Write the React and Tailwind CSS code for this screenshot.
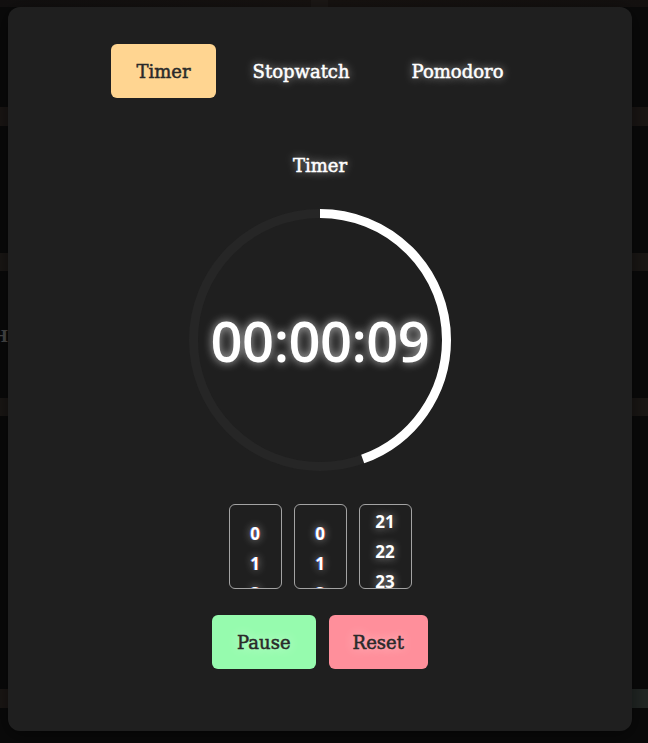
import React from "react";

const serif = { fontFamily: '"DejaVu Serif", "Liberation Serif", serif' };
const sans = { fontFamily: '"Open Sans", "Noto Sans", sans-serif' };

const Wheel = ({ items, offset, fringe }) => {
  return (
    <div className="w-[53px] h-[85px] border border-[#a3a3a3] rounded-md overflow-hidden">
      <div className={`flex flex-col items-center ${offset}`}>
        {items.map((n) => (
          <div
            key={n}
            className={`h-[30px] leading-[30px] text-[17px] font-bold text-white ${
              fringe
                ? "[text-shadow:-0.6px_0_rgba(60,120,255,0.8),0.6px_0_rgba(255,60,40,0.8),0_0_8px_rgba(255,255,255,0.6)]"
                : "[text-shadow:0_0_8px_rgba(255,255,255,0.6)]"
            }`}
            style={sans}
          >
            {n}
          </div>
        ))}
      </div>
    </div>
  );
};

const App = () => {
  const progress = 0.445;
  const r = 126.5;
  const circ = 2 * Math.PI * r;

  return (
    <div className="relative w-[648px] h-[743px] overflow-hidden bg-[#0a0a0a]">
      {/* page behind the modal */}
      <div className="flex flex-col">
        <div className="h-[7px] flex bg-gradient-to-r from-[#121010] via-[#171311] to-[#141110]">
          <div className="w-[311px]" />
          <div className="w-[17px] bg-[#1c1816]" />
        </div>
        <div className="h-[100px]" />
        <div className="h-[19px] bg-[#1a1614]" />
        <div className="h-[127px]" />
        <div className="h-[18px] bg-[#1a1715]" />
        <div className="h-[57px]" />
        <div className="h-[18px] flex items-center">
          <div className="w-[8px] overflow-hidden flex justify-end">
            <span className="text-[16px] font-bold text-[#4a4a4a] leading-none" style={serif}>
              H
            </span>
          </div>
        </div>
        <div className="h-[52px]" />
        <div className="h-[18px] bg-[#1a1715]" />
        <div className="h-[273px]" />
        <div className="h-[19px] flex">
          <div className="flex-1 bg-[#1b1715]" />
          <div className="flex-1 bg-[#222725]" />
        </div>
      </div>

      {/* modal */}
      <div className="absolute left-[8px] top-[7px] w-[624px] h-[724px] rounded-xl bg-[#1f1f1f] shadow-[0_4px_20px_rgba(0,0,0,0.5)] flex flex-col items-center pt-[37px]">
        <div className="flex gap-3" style={serif}>
          <button className="h-[54px] px-[25px] rounded-md bg-[#ffd591] text-[#2a2a2a] text-[18px] [-webkit-text-stroke:0.5px_#2a2a2a]">
            Timer
          </button>
          <button className="h-[54px] px-[25px] rounded-md text-white text-[18px] [-webkit-text-stroke:0.5px_#fff] [text-shadow:0_0_8px_rgba(255,255,255,0.7)]">
            Stopwatch
          </button>
          <button className="h-[54px] px-[25px] rounded-md text-white text-[18px] [-webkit-text-stroke:0.5px_#fff] [text-shadow:0_0_8px_rgba(255,255,255,0.7)]">
            Pomodoro
          </button>
        </div>

        <div
          className="mt-[55px] h-[26px] leading-[26px] text-[18px] text-white [-webkit-text-stroke:0.5px_#fff] [text-shadow:0_0_8px_rgba(255,255,255,0.7)]"
          style={serif}
        >
          Timer
        </div>

        <div className="mt-[30px] relative w-[262px] h-[262px] flex items-center justify-center">
          <svg width="262" height="262" viewBox="0 0 262 262" className="absolute inset-0 -rotate-90">
            <circle cx="131" cy="131" r={r} fill="none" stroke="#262626" strokeWidth="9" />
            <circle
              cx="131"
              cy="131"
              r={r}
              fill="none"
              stroke="#ffffff"
              strokeWidth="9"
              strokeDasharray={`${circ * progress} ${circ}`}
            />
          </svg>
          <div
            className="relative text-[56px] font-semibold text-white tracking-[-0.5px] [text-shadow:0_0_10px_rgba(255,255,255,0.75)]"
            style={sans}
          >
            00:00:09
          </div>
        </div>

        <div className="mt-[33px] flex gap-3">
          <Wheel items={[0, 1, 2]} offset="pt-[14px]" fringe />
          <Wheel items={[0, 1, 2]} offset="pt-[14px]" fringe />
          <Wheel items={[21, 22, 23]} offset="pt-[2px]" />
        </div>

        <div className="mt-[26px] flex gap-[13px]" style={serif}>
          <button className="h-[54px] px-[25px] rounded-md bg-[#96fbae] text-[#2a2a2a] text-[18px] [-webkit-text-stroke:0.5px_#2a2a2a] [text-shadow:0_0_12px_rgba(255,255,255,0.6)]">
            Pause
          </button>
          <button className="h-[54px] px-[24px] rounded-md bg-[#ff8f9b] text-[#2a2a2a] text-[18px] [-webkit-text-stroke:0.5px_#2a2a2a] [text-shadow:0_0_12px_rgba(255,255,255,0.6)]">
            Reset
          </button>
        </div>
      </div>
    </div>
  );
};

export default App;
